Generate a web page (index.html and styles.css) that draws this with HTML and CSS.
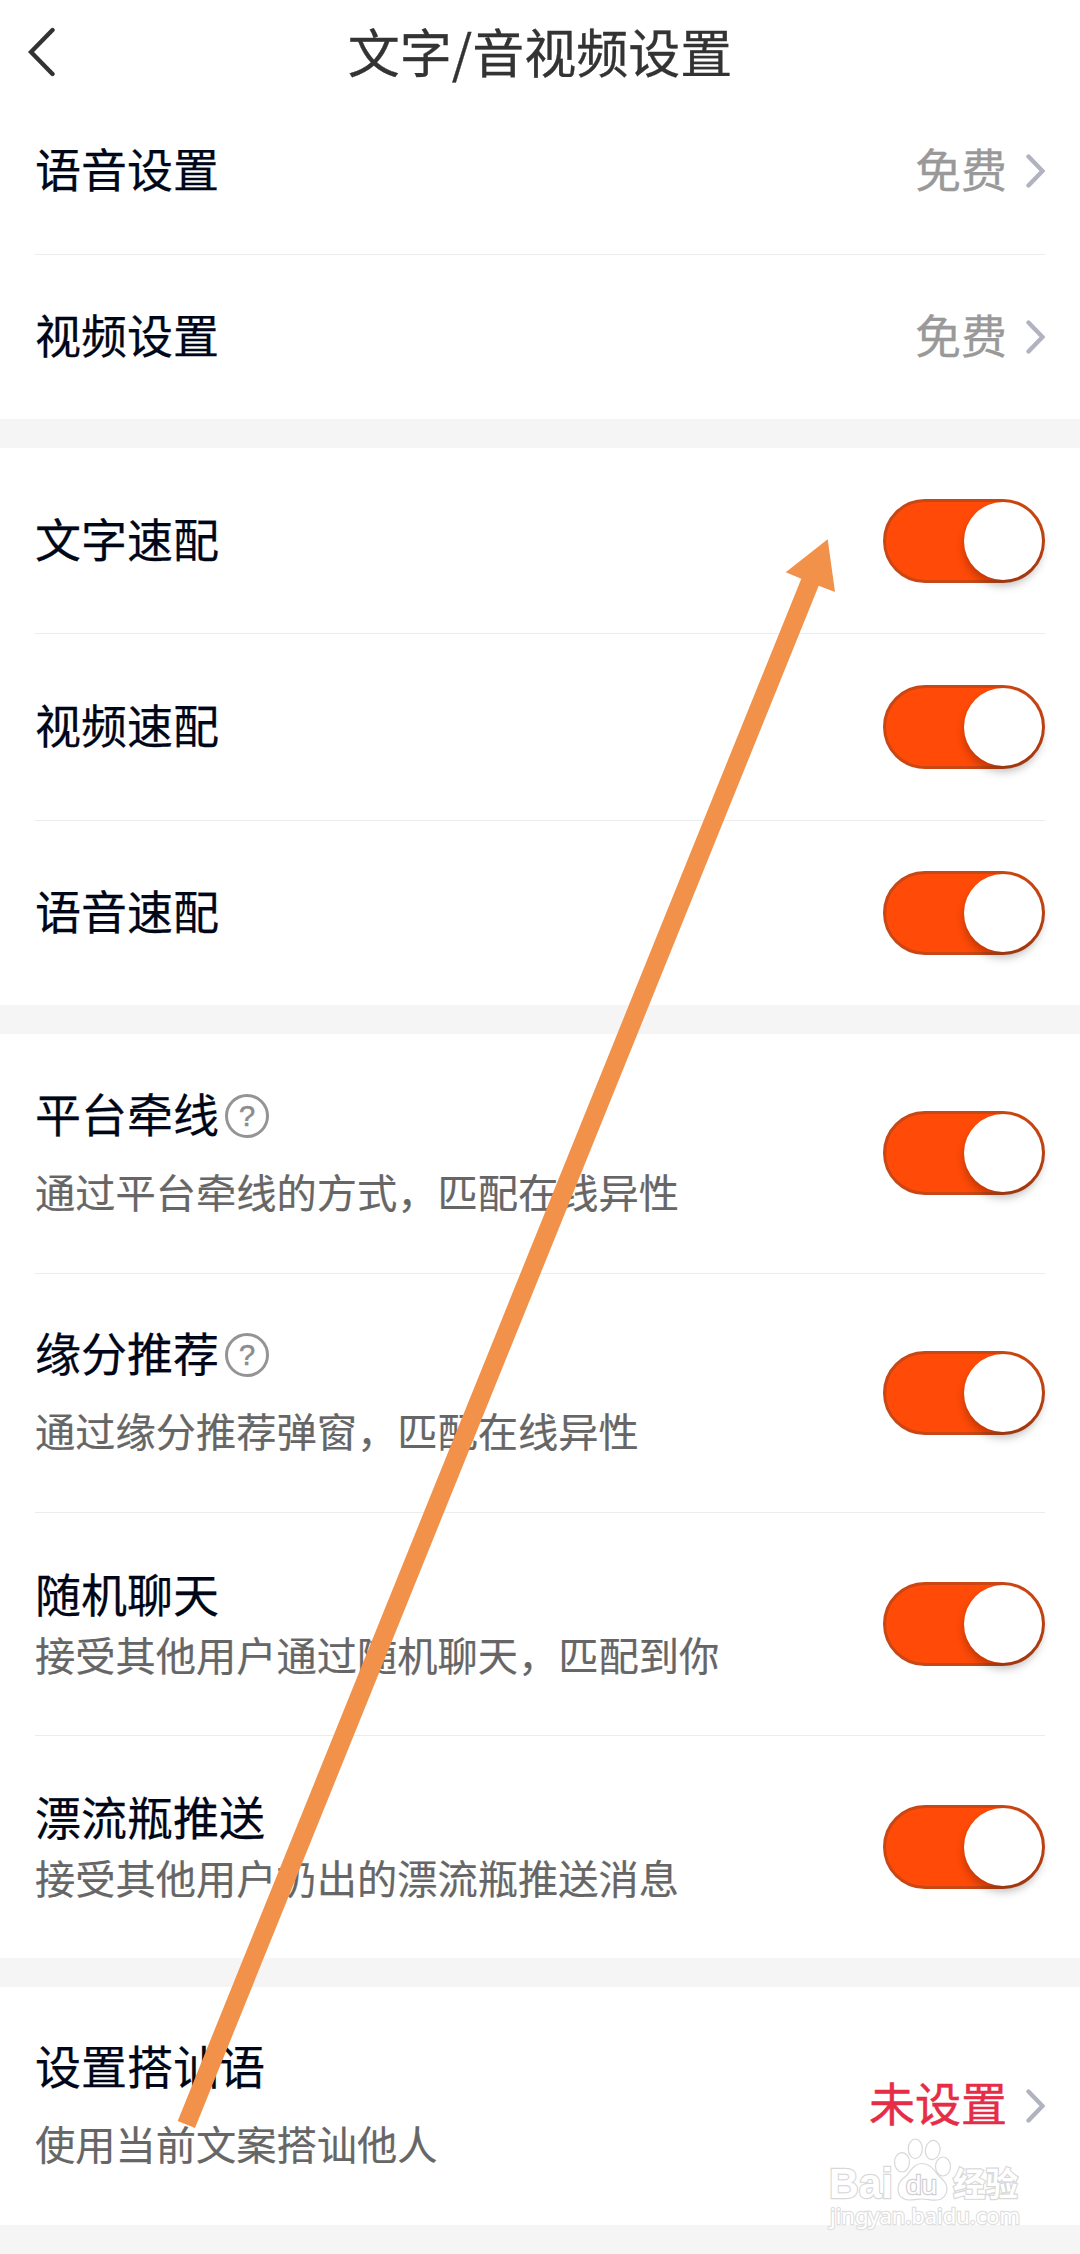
FILE: index.html
```html
<!DOCTYPE html>
<html lang="zh-CN">

<head>
    <meta charset="UTF-8">
    <title>文字/音视频设置</title>
    <link rel="stylesheet" href="styles.css">
</head>

<body>
    <header class="header">
        <svg class="back" width="28" height="50" viewBox="0 0 28 50">
            <path d="M24.5 3 L3 25 L24.5 47"/>
        </svg>
        <h1>文字/音视频设置</h1>
    </header>

    <!-- Price settings -->
    <section class="group">
        <div class="row row-link">
            <span class="label">语音设置</span>
            <span class="value">免费</span>
            <svg class="chevron" width="19" height="34" viewBox="0 0 19 34"><path d="M2.5 2.5 L16.5 17 L2.5 31.5"/></svg>
        </div>
        <div class="row row-link">
            <span class="label">视频设置</span>
            <span class="value">免费</span>
            <svg class="chevron" width="19" height="34" viewBox="0 0 19 34"><path d="M2.5 2.5 L16.5 17 L2.5 31.5"/></svg>
        </div>
    </section>

    <!-- Quick match -->
    <section class="group">
        <div class="row row-match">
            <span class="label">文字速配</span>
            <span class="switch"></span>
        </div>
        <div class="row row-match">
            <span class="label">视频速配</span>
            <span class="switch"></span>
        </div>
        <div class="row row-match">
            <span class="label">语音速配</span>
            <span class="switch"></span>
        </div>
    </section>

    <!-- Recommendations -->
    <section class="group">
        <div class="row row-tall">
            <div class="info spaced">
                <p class="label">平台牵线<span class="help">?</span></p>
                <p class="desc">通过平台牵线的方式，匹配在线异性</p>
            </div>
            <span class="switch"></span>
        </div>
        <div class="row row-tall">
            <div class="info spaced">
                <p class="label">缘分推荐<span class="help">?</span></p>
                <p class="desc">通过缘分推荐弹窗，匹配在线异性</p>
            </div>
            <span class="switch"></span>
        </div>
        <div class="row row-desc">
            <div class="info">
                <p class="label">随机聊天</p>
                <p class="desc">接受其他用户通过随机聊天，匹配到你</p>
            </div>
            <span class="switch"></span>
        </div>
        <div class="row row-desc">
            <div class="info">
                <p class="label">漂流瓶推送</p>
                <p class="desc">接受其他用户扔出的漂流瓶推送消息</p>
            </div>
            <span class="switch"></span>
        </div>
    </section>

    <!-- Greeting -->
    <section class="group">
        <div class="row row-tall">
            <div class="info spaced">
                <p class="label">设置搭讪语</p>
                <p class="desc">使用当前文案搭讪他人</p>
            </div>
            <span class="value unset">未设置</span>
            <svg class="chevron" width="19" height="34" viewBox="0 0 19 34"><path d="M2.5 2.5 L16.5 17 L2.5 31.5"/></svg>
        </div>
    </section>

    <!-- Arrow pointing at the first switch -->
    <svg class="arrow" width="1080" height="2254" viewBox="0 0 1080 2254">
        <path d="M827.7 539.3 L785.7 572.3 L801.3 578.7 L177.7 2121 L195 2128 L818.7 585.7 L835 592 Z"/>
    </svg>

    <!-- Watermark -->
    <svg class="watermark" width="220" height="110" viewBox="0 0 220 110">
        <text class="brand" x="9" y="68" textLength="64" lengthAdjust="spacingAndGlyphs">Bai</text>
        <g class="paw">
            <ellipse cx="82" cy="32.3" rx="7.5" ry="9.7"/>
            <ellipse cx="95.3" cy="18.8" rx="7" ry="9.8"/>
            <ellipse cx="112.7" cy="20" rx="7.3" ry="9.6" transform="rotate(10 112.7 20)"/>
            <ellipse cx="123" cy="36.5" rx="7.5" ry="9.5"/>
            <path d="M102 33.5 C94 33.5 91 41 86 46 C81 50 78 53 78 59 C78 66 83 70 89 70 C95 70 98 69 102 69 C107 69 112 70.5 117 70 C123 69.5 127 65 127 59 C127 53 123 50 119 46 C114 41 111 33.5 102 33.5 Z"/>
        </g>
        <text class="du" x="86" y="64" textLength="31" lengthAdjust="spacingAndGlyphs">du</text>
        <text class="cn" x="133" y="66" textLength="65" lengthAdjust="spacingAndGlyphs">经验</text>
        <text class="url" x="10" y="94" textLength="190" lengthAdjust="spacingAndGlyphs">jingyan.baidu.com</text>
    </svg>
</body>

</html>
```
FILE: styles.css
```css
body {
    font-family: "Noto Sans CJK SC", sans-serif;
    margin: 0;
    padding: 0;
    position: relative;
    height: 2254px;
    overflow: hidden;
    background-color: #f5f5f5;
}

.header {
    display: flex;
    align-items: center;
    height: 88px;
    padding: 16px 28px 0;
    box-sizing: border-box;
    background-color: #fff;
}

.header h1 {
    flex: 1;
    margin: 0 28px 0 0;
    padding-bottom: 2px;
    font-size: 52px;
    font-weight: 400;
    line-height: 70px;
    text-align: center;
    color: #333;
    -webkit-text-stroke: 0.3px #333;
}

.back path {
    fill: none;
    stroke: #333;
    stroke-width: 4.4;
    stroke-linecap: round;
}

.group {
    background-color: #fff;
    padding: 0 35px;
    margin-bottom: 29px;
}

.row {
    display: flex;
    align-items: center;
    box-sizing: border-box;
    border-bottom: 1px solid #ececec;
}

.row:last-child {
    border-bottom: none;
}

.row-link {
    height: 167px;
    padding-bottom: 1px;
}

.row-link:last-child {
    height: 164px;
}

.row-match {
    height: 186px;
}

.row-match:nth-child(2) {
    height: 187px;
}

.row-match:last-child {
    height: 184px;
}

.row-tall {
    height: 240px;
    padding-bottom: 1px;
}

.row-tall:nth-child(2) {
    height: 239px;
}

.row-tall:last-child {
    height: 238px;
}

.row-desc {
    height: 223px;
}

.row-desc:last-child {
    height: 222px;
}

.label {
    flex: 1;
    margin: 0;
    padding-bottom: 8px;
    font-size: 46px;
    line-height: 56px;
    color: #000718;
    -webkit-text-stroke: 0.25px #000718;
}

.row-desc .label {
    padding: 2px 0 6px;
}

.info {
    flex: 1;
}

.info .label {
    display: flex;
    align-items: center;
}

.desc {
    margin: 0;
    padding-bottom: 5px;
    font-size: 40.25px;
    line-height: 55px;
    color: #666;
    -webkit-text-stroke: 0.2px #666;
}

.spaced .desc {
    margin-top: 15px;
}

.help {
    display: flex;
    align-items: center;
    justify-content: center;
    width: 44px;
    height: 44px;
    margin: 8px 0 0 6px;
    box-sizing: border-box;
    border: 3px solid #949494;
    border-radius: 50%;
    font-family: "Liberation Sans", sans-serif;
    font-size: 29px;
    line-height: 38px;
    color: #8c8c8c;
    -webkit-text-stroke: 0.6px #8c8c8c;
}

.value {
    padding-bottom: 8px;
    font-size: 46px;
    line-height: 56px;
    color: #999;
    -webkit-text-stroke: 0.3px #999;
}

.value.unset {
    padding-bottom: 10px;
    color: #e62d48;
    -webkit-text-stroke: 0.5px #e62d48;
}

.chevron {
    margin-left: 19px;
}

.chevron path {
    fill: none;
    stroke: #b1b4c0;
    stroke-width: 4.4;
    stroke-linecap: round;
}

.switch {
    display: flex;
    justify-content: flex-end;
    width: 162px;
    height: 84px;
    box-sizing: border-box;
    border: 3px solid #c94714;
    border-radius: 42px;
    background-color: #ff4a08;
}

.switch::after {
    content: "";
    width: 78px;
    height: 78px;
    border-radius: 50%;
    background-color: #fff;
    box-shadow: 0 6px 8px rgba(0, 0, 0, 0.25);
}

.arrow {
    position: absolute;
    left: 0;
    top: 0;
    fill: #f29149;
}

.watermark {
    position: absolute;
    left: 820px;
    top: 2130px;
    fill: #fff;
    stroke: #d8d8d8;
    stroke-width: 1.2;
}

.watermark text {
    paint-order: stroke;
    stroke-width: 2.4;
    font-family: "Liberation Sans", "Noto Sans CJK SC", sans-serif;
}

.watermark .brand {
    font-size: 43px;
    font-weight: bold;
}

.watermark .du {
    font-size: 26px;
    stroke: #d0d0d0;
}

.watermark .cn {
    font-size: 33px;
    font-weight: bold;
}

.watermark .url {
    font-family: "Noto Sans", sans-serif;
    font-size: 22px;
    stroke: #e0e0e0;
}
```
